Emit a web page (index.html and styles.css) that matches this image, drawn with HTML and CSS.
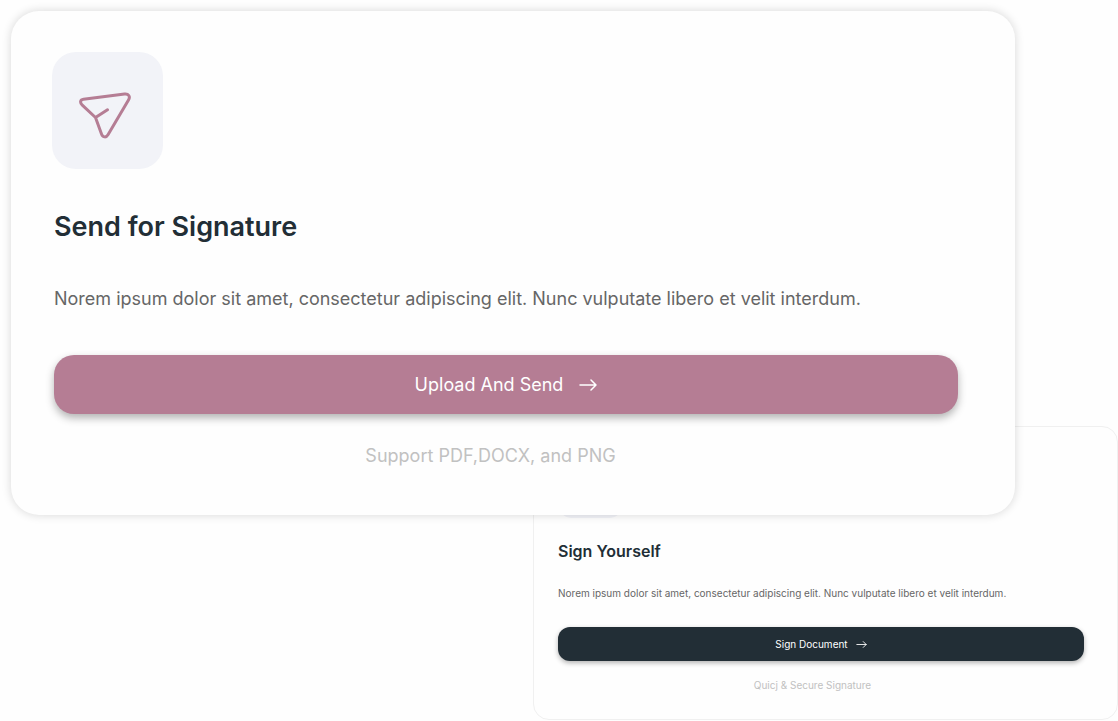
FILE: index.html
```html
<!DOCTYPE html>
<html lang="en">
<head>
<meta charset="utf-8">
<meta name="viewport" content="width=device-width, initial-scale=1">
<title>Signature</title>
<link rel="stylesheet" href="styles.css">
</head>
<body>
<main class="stage">
  <section class="card card-front">
    <div class="tile">
      <svg class="tile-icon" viewBox="0 0 52 48" fill="none" stroke="currentColor" stroke-width="3" stroke-linecap="round" stroke-linejoin="round" aria-hidden="true">
        <path d="M16.500 26.500 3.300 14.200C.6 11.700 1.200 8.600 4.500 8.200L45.500 3.100C49.500 2.600 51.600 5.400 49.500 9L29 43.800C27.300 46.800 23.800 46.500 22.600 43.300ZM16.500 26.500 28.500 18.800"/>
      </svg>
    </div>
    <h2 class="title">Send for Signature</h2>
    <p class="text">Norem ipsum dolor sit amet, consectetur adipiscing elit. Nunc vulputate libero et velit interdum.</p>
    <button class="action" type="button">
      <span>Upload And Send</span>
      <svg class="arrow" viewBox="0 0 18 12" fill="none" stroke="currentColor" stroke-width="1.500" stroke-linecap="round" stroke-linejoin="round" aria-hidden="true"><path d="M1 6H17M12 1 17 6 12 11"/></svg>
    </button>
    <p class="note">Support PDF,DOCX, and PNG</p>
  </section>
  <section class="card card-back">
    <div class="tile"></div>
    <h2 class="title">Sign Yourself</h2>
    <p class="text">Norem ipsum dolor sit amet, consectetur adipiscing elit. Nunc vulputate libero et velit interdum.</p>
    <button class="action" type="button">
      <span>Sign Document</span>
      <svg class="arrow" viewBox="0 0 18 12" fill="none" stroke="currentColor" stroke-width="1.500" stroke-linecap="round" stroke-linejoin="round" aria-hidden="true"><path d="M1 6H17M12 1 17 6 12 11"/></svg>
    </button>
    <p class="note">Quicj &amp; Secure Signature</p>
  </section>
</main>
</body>
</html>
```
FILE: styles.css
```css
* {
  box-sizing: border-box;
}

body {
  margin: 0;
  background: #fefefe;
  color: #222e36;
  font-family: Inter, "Liberation Sans", sans-serif;
}

/* The two cards share the middle column and the middle row, where they overlap. */
.stage {
  display: grid;
  grid-template-columns: 522fr 482fr 103fr;
  grid-template-rows: auto 89px auto;
  padding: 11px 0 0 11px;
}

.card {
  display: flex;
  flex-direction: column;
  align-items: stretch;
  background: #fefefe;
}

.card-front {
  grid-area: 1 / 1 / 3 / 3;
  z-index: 1;
  padding: 41px 57px 47px 43px;
  border-radius: 28px;
  box-shadow: 0 0 8px 1px rgba(0, 0, 0, 0.13);
}

.card-back {
  grid-area: 2 / 2 / 4 / 4;
  padding: 24px 33px 27px 24px;
  border: 1px solid #f0f0f0;
  border-radius: 16px;
}

.tile {
  display: flex;
  align-items: center;
  justify-content: center;
  background: #f2f3f8;
}

.card-front .tile {
  width: 111px;
  height: 117px;
  margin-left: -2px;
  padding: 9px 5px 0 0;
  border-radius: 24px;
}

.card-back .tile {
  width: 65px;
  height: 67px;
  border-radius: 14px;
}

.tile-icon {
  width: 52px;
  height: 48px;
  color: #b57d94;
}

.title,
.text,
.note {
  margin: 0;
}

.title {
  font-weight: 600;
}

.text {
  color: #666;
}

.note {
  color: #c1c1c1;
  text-align: center;
}

.action {
  display: flex;
  align-items: center;
  justify-content: center;
  border: 0;
  color: #fff;
  font-family: inherit;
  cursor: pointer;
}

.card-front .title {
  margin-top: 40px;
  font-size: 27px;
  line-height: 36px;
}

.card-front .text {
  margin-top: 42px;
  font-size: 18px;
  line-height: 24px;
}

.card-front .action {
  gap: 16px;
  margin-top: 44px;
  padding: 17px;
  border-radius: 20px;
  background: #b57d94;
  box-shadow: 0 4px 8px rgba(0, 0, 0, 0.3);
  font-size: 18px;
  line-height: 25px;
}

.card-front .note {
  margin-top: 30px;
  padding-right: 31px;
  font-size: 18px;
  line-height: 24px;
}

.card-front .arrow {
  width: 18px;
  height: 12px;
}

.card-back .title {
  margin-top: 23px;
  font-size: 16px;
  line-height: 20px;
}

.card-back .text {
  margin-top: 25px;
  font-size: 10px;
  line-height: 14px;
}

.card-back .action {
  gap: 8px;
  margin-top: 27px;
  padding: 10px;
  border-radius: 12px;
  background: #222e36;
  box-shadow: 0 2px 5px rgba(0, 0, 0, 0.3);
  font-size: 10px;
  line-height: 14px;
}

.card-back .note {
  margin-top: 17px;
  padding-right: 17px;
  font-size: 10px;
  line-height: 14px;
}

.card-back .arrow {
  width: 11px;
  height: 7px;
}
```
